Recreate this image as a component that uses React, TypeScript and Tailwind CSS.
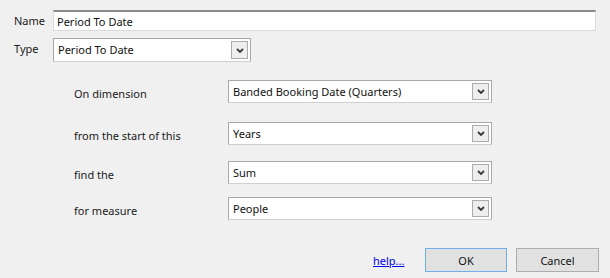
import { ReactNode } from "react"

const Chevron = () => (
    <svg width="8" height="5" viewBox="0 0 8 5" className="block">
        <path d="M1 1 L4 4 L7 1" fill="none" stroke="#3a3a3a" strokeWidth="1.8" />
    </svg>
)

type SelectProps = {
    value: string
    className?: string
}

const Select = ({ value, className }: SelectProps) => (
    <div className={`flex items-stretch bg-white border border-[#a9a9a9] border-b-[#cfcfcf] p-[2px] ${className ?? ""}`}>
        <span className="flex-1 flex items-center pl-[2px] pb-[1px] text-[#111] truncate">{value}</span>
        <span className="w-[17px] flex items-center justify-center bg-[#eeeeee] border border-[#acacac]">
            <Chevron />
        </span>
    </div>
)

const Row = ({ label, children }: { label: string; children: ReactNode }) => (
    <div className="flex items-center">
        <span className="w-[154px] pt-[4px] text-[#1a1a1a]">{label}</span>
        {children}
    </div>
)

export default function App() {
    return (
        <div
            className="w-[610px] h-[278px] bg-[#f0f0f0] text-[11px] leading-none flex flex-col"
            style={{ fontFamily: '"Noto Sans", "Open Sans", sans-serif' }}
        >
            <div className="flex items-center pl-[14px] pt-[10px]">
                <span className="w-[39px] pb-[1px] text-[#1a1a1a]">Name</span>
                <div className="w-[543px] h-[21px] bg-white border border-[#dadada] border-t-2 border-t-[#8a8a8a] flex items-center pl-[3px] text-[#111]">
                    Period To Date
                </div>
            </div>
            <div className="flex items-center pl-[14px] mt-[7px]">
                <span className="w-[39px] pb-[3px] text-[#1a1a1a]">Type</span>
                <Select value="Period To Date" className="w-[198px] h-[24px]" />
            </div>
            <div className="flex flex-col pl-[74px] mt-[18px]">
                <Row label="On dimension">
                    <Select value="Banded Booking Date (Quarters)" className="w-[264px] h-[23px]" />
                </Row>
                <div className="mt-[19px]">
                    <Row label="from the start of this">
                        <Select value="Years" className="w-[264px] h-[23px]" />
                    </Row>
                </div>
                <div className="mt-[16px]">
                    <Row label="find the">
                        <Select value="Sum" className="w-[264px] h-[23px]" />
                    </Row>
                </div>
                <div className="mt-[13px]">
                    <Row label="for measure">
                        <Select value="People" className="w-[264px] h-[23px]" />
                    </Row>
                </div>
            </div>
            <div className="flex items-center pl-[373px] mt-[28px]">
                <a className="text-[#0000ee] underline w-[52px]">help...</a>
                <button className="w-[82px] h-[24px] bg-[#e1e1e1] border border-[#6fb0ea] text-[#111]">OK</button>
                <button className="ml-[9px] w-[83px] h-[24px] bg-[#e1e1e1] border border-[#adadad] text-[#111]">Cancel</button>
            </div>
        </div>
    )
}
